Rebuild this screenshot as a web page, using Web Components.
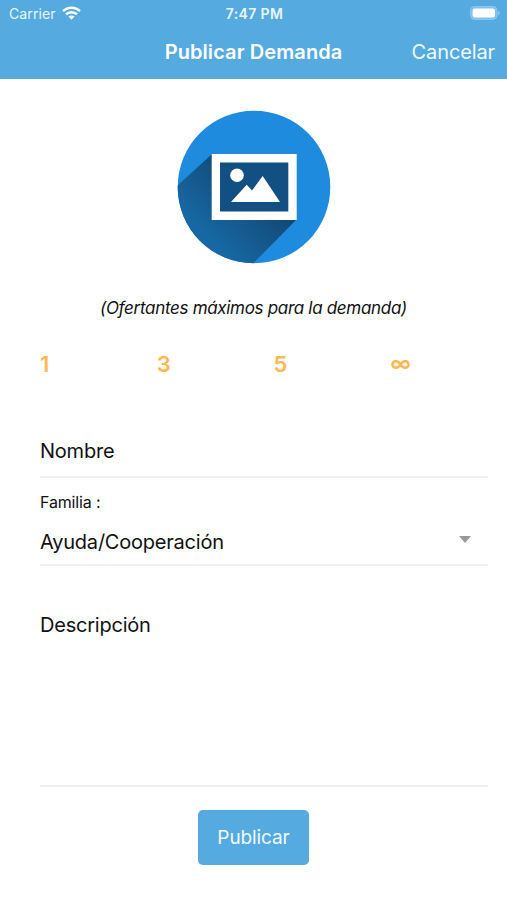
<!DOCTYPE html>
<html lang="es">
<head>
<meta charset="UTF-8">
<meta name="viewport" content="width=device-width, initial-scale=1">
<title>Publicar Demanda</title>
<style>
  body {
    margin: 0;
    background: #fff;
    color: #111;
    font-family: Inter, "Liberation Sans", sans-serif;
  }
</style>
</head>
<body>
<demand-page></demand-page>

<script>
// Status bar
class StatusBar extends HTMLElement {
  constructor() {
    super();
    this.attachShadow({ mode: 'open' });
  }

  connectedCallback() {
    this.shadowRoot.innerHTML = `
      <style>
        :host {
          display: grid;
          grid-template-columns: 1fr auto 1fr;
          align-items: center;
          height: 28px;
          padding: 0 7px 0 9px;
          color: #e9f6ff;
          font-size: 14px;
          line-height: 28px;
        }
        .carrier {
          display: flex;
          align-items: center;
          gap: 6px;
          letter-spacing: 0.1px;
        }
        .time {
          font-size: 14px;
          font-weight: 600;
          letter-spacing: 0.35px;
        }
        .battery {
          justify-self: end;
        }
        svg {
          display: block;
          position: relative;
          top: -1px;
        }
      </style>
      <div class="carrier">
        <span>${this.getAttribute('carrier')}</span>
        <svg width="19" height="14" viewBox="0 0 19 14">
          <g fill="none" stroke="#fff" stroke-width="2.5">
            <path d="M1 5.2C5.7 .5 13.3 .5 18 5.2"/>
            <path d="M4 8.4c3.1-3 7.9-3 11 0"/>
          </g>
          <path d="M9.5 13.8l-3.1-3.2c1.7-1.5 4.5-1.5 6.2 0z" fill="#fff"/>
        </svg>
      </div>
      <span class="time">${this.getAttribute('time')}</span>
      <svg class="battery" width="30" height="14" viewBox="0 0 30 14">
        <rect x=".6" y=".6" width="26.4" height="12.8" rx="4" fill="#7fc0ea" stroke="#8fcaee"/>
        <rect x="2.6" y="2.6" width="22.4" height="8.8" rx="2.2" fill="#fff"/>
        <path d="M28.3 5v4c1-.4 1.4-1.1 1.4-2s-.4-1.6-1.4-2z" fill="#9bd0f1"/>
      </svg>
    `;
  }
}
customElements.define('status-bar', StatusBar);

// Navigation bar: title in the middle, action on the right
class NavBar extends HTMLElement {
  constructor() {
    super();
    this.attachShadow({ mode: 'open' });
  }

  connectedCallback() {
    this.shadowRoot.innerHTML = `
      <style>
        :host {
          display: grid;
          grid-template-columns: 1fr auto 1fr;
          align-items: center;
          height: 51px;
          box-sizing: border-box;
          padding: 0 12px 3px;
          color: #fff;
          font-size: 20px;
          line-height: 28px;
        }
        .title {
          grid-column: 2;
          font-weight: 600;
          letter-spacing: 0.08px;
        }
        .action {
          justify-self: end;
          color: #f1faff;
          letter-spacing: -0.12px;
        }
      </style>
      <span class="title"><slot></slot></span>
      <span class="action"><slot name="action"></slot></span>
    `;
  }
}
customElements.define('nav-bar', NavBar);

// Round picture placeholder with long shadow
class PhotoPicker extends HTMLElement {
  constructor() {
    super();
    this.attachShadow({ mode: 'open' });
  }

  connectedCallback() {
    this.shadowRoot.innerHTML = `
      <style>
        :host {
          display: block;
          width: 154px;
          height: 154px;
        }
        svg {
          display: block;
        }
      </style>
      <svg width="154" height="154" viewBox="0 0 154 154">
        <defs>
          <clipPath id="disc"><circle cx="77" cy="77" r="76.3"/></clipPath>
          <linearGradient id="shade" gradientUnits="userSpaceOnUse" x1="78" y1="77" x2="30" y2="125">
            <stop offset="0" stop-color="#124a76"/>
            <stop offset="1" stop-color="#1767a3"/>
          </linearGradient>
        </defs>
        <circle cx="77" cy="77" r="76.3" fill="#1e8bdf"/>
        <path clip-path="url(#disc)" d="M35 44L-10 85V180H50L119.5 109.5z" fill="url(#shade)"/>
        <rect x="34.7" y="44" width="85" height="66" fill="#fff"/>
        <rect x="43" y="52.5" width="68.3" height="49" fill="#125083"/>
        <circle cx="60" cy="65.3" r="6.8" fill="#fff"/>
        <path d="M54 92L69.7 74.7L75 80.6L85.7 66L103 92z" fill="#fff"/>
      </svg>
    `;
  }
}
customElements.define('photo-picker', PhotoPicker);

// Options for the number of bidders
class LimitOptions extends HTMLElement {
  constructor() {
    super();
    this.attachShadow({ mode: 'open' });
  }

  connectedCallback() {
    const options = JSON.parse(this.getAttribute('options') || '[]');
    this.shadowRoot.innerHTML = `
      <style>
        :host {
          display: grid;
          grid-template-columns: repeat(4, 116.8px);
          color: #ffb752;
          font-size: 22px;
          font-weight: 600;
          line-height: 28px;
        }
        span:last-child {
          font-size: 21px;
        }
      </style>
      ${options.map(option => `<span>${option}</span>`).join('')}
    `;
  }
}
customElements.define('limit-options', LimitOptions);

// Underlined form field, with optional label and dropdown arrow
class FormField extends HTMLElement {
  constructor() {
    super();
    this.attachShadow({ mode: 'open' });
  }

  connectedCallback() {
    const label = this.getAttribute('label');
    this.shadowRoot.innerHTML = `
      <style>
        :host {
          display: flex;
          flex-direction: column;
          box-sizing: border-box;
          border-bottom: 2px solid #f1f1f2;
        }
        .label {
          font-size: 16px;
          letter-spacing: -0.15px;
          line-height: 20px;
          margin-bottom: 16px;
        }
        .value {
          display: flex;
          justify-content: space-between;
          align-items: center;
          font-size: 20px;
          letter-spacing: -0.22px;
          line-height: 28px;
        }
        .arrow {
          width: 12px;
          height: 7px;
          margin: 0 17px 5px 0;
          background: #999;
          clip-path: polygon(0 0, 100% 0, 50% 100%);
        }
      </style>
      ${label ? `<div class="label">${label}</div>` : ''}
      <div class="value">
        <slot></slot>
        ${this.hasAttribute('dropdown') ? '<span class="arrow"></span>' : ''}
      </div>
    `;
  }
}
customElements.define('form-field', FormField);

class PrimaryButton extends HTMLElement {
  constructor() {
    super();
    this.attachShadow({ mode: 'open' });
  }

  connectedCallback() {
    this.shadowRoot.innerHTML = `
      <style>
        :host {
          display: block;
        }
        button {
          display: block;
          width: 111px;
          height: 55px;
          padding: 1px 0 0;
          border: none;
          border-radius: 5px;
          background: #55aadf;
          color: #f1faff;
          font-family: inherit;
          font-size: 19px;
          letter-spacing: -0.1px;
          line-height: 28px;
        }
      </style>
      <button type="button"><slot></slot></button>
    `;
  }
}
customElements.define('primary-button', PrimaryButton);

class DemandPage extends HTMLElement {
  constructor() {
    super();
    this.attachShadow({ mode: 'open' });
  }

  connectedCallback() {
    this.shadowRoot.innerHTML = `
      <style>
        :host {
          display: flex;
          flex-direction: column;
          height: 900px;
        }
        header {
          background: #55aadf;
        }
        main {
          display: flex;
          flex-direction: column;
          padding: 31px 19px 0 40px;
        }
        photo-picker {
          margin-left: 137px;
        }
        .hint {
          margin: 30px 0 0 60px;
          font-size: 17px;
          font-style: italic;
          letter-spacing: -0.31px;
          line-height: 28px;
          white-space: nowrap;
        }
        limit-options {
          margin-top: 28px;
        }
        .name {
          height: 41px;
          margin-top: 59px;
        }
        .family {
          height: 74px;
          margin-top: 14px;
        }
        .description {
          height: 176px;
          margin-top: 45px;
        }
        primary-button {
          margin: 23px 0 0 158px;
        }
      </style>
      <header>
        <status-bar carrier="Carrier" time="7:47 PM"></status-bar>
        <nav-bar>Publicar Demanda<span slot="action">Cancelar</span></nav-bar>
      </header>
      <main>
        <photo-picker></photo-picker>
        <div class="hint">(Ofertantes máximos para la demanda)</div>
        <limit-options options='["1", "3", "5", "∞"]'></limit-options>
        <form-field class="name">Nombre</form-field>
        <form-field class="family" label="Familia :" dropdown>Ayuda/Cooperación</form-field>
        <form-field class="description">Descripción</form-field>
        <primary-button>Publicar</primary-button>
      </main>
    `;
  }
}
customElements.define('demand-page', DemandPage);
</script>
</body>
</html>
